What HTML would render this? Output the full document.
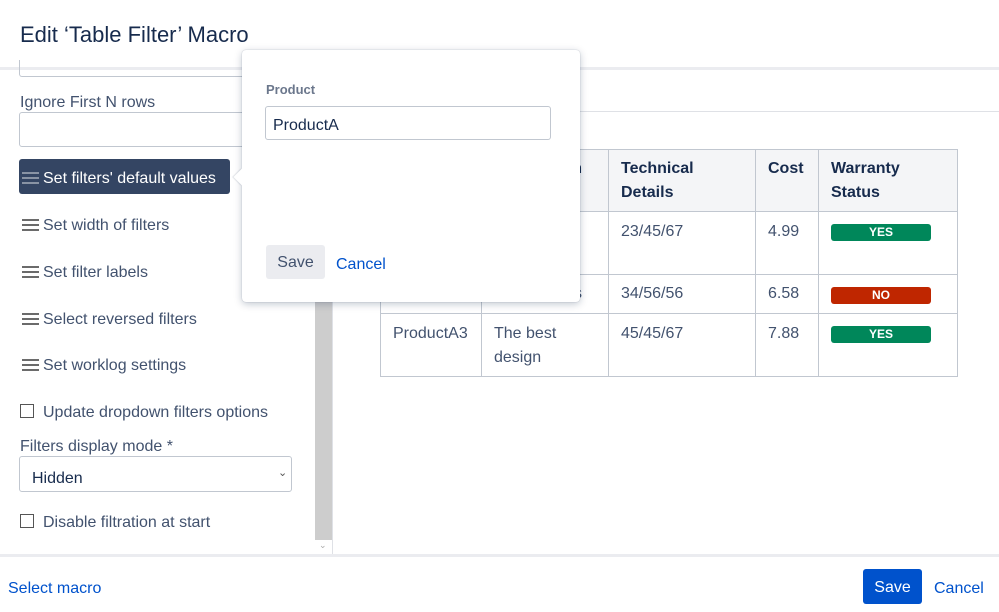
<!DOCTYPE html>
<html><head><meta charset="utf-8"><style>
*{box-sizing:border-box;margin:0;padding:0}
body{width:999px;height:612px;overflow:hidden;background:#fff;font-family:"Liberation Sans",sans-serif;color:#172b4d;position:relative;font-size:16px}
.a{position:absolute;white-space:nowrap}
.ham{position:absolute;width:17px;height:12px}
.ham i{display:block;height:2px;background:#6b6b6b;margin-bottom:3px}
.lbl{color:#42526e;font-size:16px;margin-top:2px}
td,th{border:1px solid #c1c7d0;vertical-align:top;text-align:left;padding:8px 12px 0;font-size:16px;line-height:24px;color:#42526e;font-weight:normal}
th{background:#f4f5f7;color:#172b4d;font-weight:bold;padding-top:7px}
.bd{display:block;width:100px;height:17px;border-radius:3px;color:#fff;font-weight:bold;font-size:12px;line-height:17px;text-align:center;margin-top:4px}
.cb{position:absolute;width:14px;height:14px;border:1.5px solid #555;background:#fff}
</style></head><body>
<div class="a" style="left:20px;top:22px;font-size:22px;color:#172b4d">Edit ‘Table Filter’ Macro</div>
<div class="a" style="left:0;top:67px;width:999px;height:3px;background:#ebecf0"></div>
<div class="a" style="left:19px;top:60px;width:280px;height:17px;border:1px solid #c1c7d0;border-top:none;border-radius:0 0 3px 3px"></div>
<div class="a lbl" style="left:20px;top:92px">Ignore First N rows</div>
<div class="a" style="left:19px;top:112px;width:280px;height:35px;border:1px solid #c1c7d0;border-radius:3px"></div>
<div class="a" style="left:19px;top:159px;width:211px;height:35px;background:#344563;border-radius:3px"></div>
<div class="ham" style="left:22px;top:172px"><i style="background:#8993a4"></i><i style="background:#8993a4"></i><i style="background:#8993a4"></i></div>
<div class="a" style="left:43px;top:170px;color:#fff">Set filters' default values</div>
<div class="ham" style="left:22px;top:219px"><i></i><i></i><i></i></div><div class="a lbl" style="left:43px;top:215px">Set width of filters</div>
<div class="ham" style="left:22px;top:266px"><i></i><i></i><i></i></div><div class="a lbl" style="left:43px;top:262px">Set filter labels</div>
<div class="ham" style="left:22px;top:313px"><i></i><i></i><i></i></div><div class="a lbl" style="left:43px;top:309px">Select reversed filters</div>
<div class="ham" style="left:22px;top:359px"><i></i><i></i><i></i></div><div class="a lbl" style="left:43px;top:355px">Set worklog settings</div>
<div class="cb" style="left:20px;top:404px"></div><div class="a lbl" style="left:43px;top:402px">Update dropdown filters options</div>
<div class="a lbl" style="left:20px;top:436px">Filters display mode *</div>
<div class="a" style="left:19px;top:456px;width:273px;height:36px;border:1px solid #c1c7d0;border-radius:3px"></div>
<div class="a" style="left:32px;top:470px;color:#172b4d">Hidden</div>
<div class="a" style="left:278px;top:466px;font-size:11px;color:#555">&#8964;</div>
<div class="cb" style="left:20px;top:514px"></div><div class="a lbl" style="left:43px;top:512px">Disable filtration at start</div>
<div class="a" style="left:315px;top:70px;width:17px;height:470px;background:#cdcdcd"></div>
<div class="a" style="left:319px;top:540px;font-size:9px;color:#aaa">&#8964;</div>
<div class="a" style="left:332px;top:70px;width:1px;height:485px;background:#dfe1e6"></div>
<div class="a" style="left:333px;top:111px;width:666px;height:1px;background:#dfe1e6"></div>
<table class="a" style="left:380px;top:149px;border-collapse:collapse;width:578px">
<tr style="height:62px"><th style="width:101px">Product</th><th style="width:127px">Description</th><th style="width:147px">Technical<br>Details</th><th style="width:63px">Cost</th><th>Warranty<br>Status</th></tr>
<tr style="height:63px"><td>ProductA1</td><td>Excellent</td><td>23/45/67</td><td>4.99</td><td><span class="bd" style="background:#00875a">YES</span></td></tr>
<tr style="height:39px"><td style="padding-top:7px">ProductA2</td><td style="padding-top:7px">Best options</td><td style="padding-top:7px">34/56/56</td><td style="padding-top:7px">6.58</td><td style="padding-top:7px"><span class="bd" style="background:#bf2600;margin-top:5px">NO</span></td></tr>
<tr style="height:63px"><td>ProductA3</td><td>The best<br>design</td><td>45/45/67</td><td>7.88</td><td><span class="bd" style="background:#00875a">YES</span></td></tr>
</table>
<div class="a" style="left:242px;top:50px;width:338px;height:252px;background:#fff;border-radius:4px;box-shadow:0 2px 8px rgba(9,30,66,.25),0 0 1px rgba(9,30,66,.3)"></div>
<div class="a" style="left:236px;top:171px;width:12px;height:12px;background:#fff;transform:rotate(45deg);box-shadow:-1px 1px 1px rgba(9,30,66,.12)"></div>
<div class="a" style="left:242px;top:165px;width:8px;height:26px;background:#fff"></div>
<div class="a" style="left:266px;top:82px;font-size:13px;font-weight:bold;color:#6b778c">Product</div>
<div class="a" style="left:265px;top:106px;width:286px;height:34px;border:1px solid #c1c7d0;border-radius:3px"></div>
<div class="a" style="left:273px;top:117px;color:#172b4d">ProductA</div>
<div class="a" style="left:266px;top:245px;width:59px;height:34px;background:#ebecf0;border-radius:3px;text-align:center;line-height:36px;color:#42526e">Save</div>
<div class="a" style="left:336px;top:256px;color:#0052cc">Cancel</div>
<div class="a" style="left:0;top:554px;width:999px;height:3px;background:#ebecf0"></div>
<div class="a" style="left:8px;top:580px;color:#0052cc">Select macro</div>
<div class="a" style="left:863px;top:569px;width:59px;height:35px;background:#0052cc;border-radius:3px;color:#fff;text-align:center;line-height:37px">Save</div>
<div class="a" style="left:934px;top:580px;color:#0052cc">Cancel</div>
</body></html>
